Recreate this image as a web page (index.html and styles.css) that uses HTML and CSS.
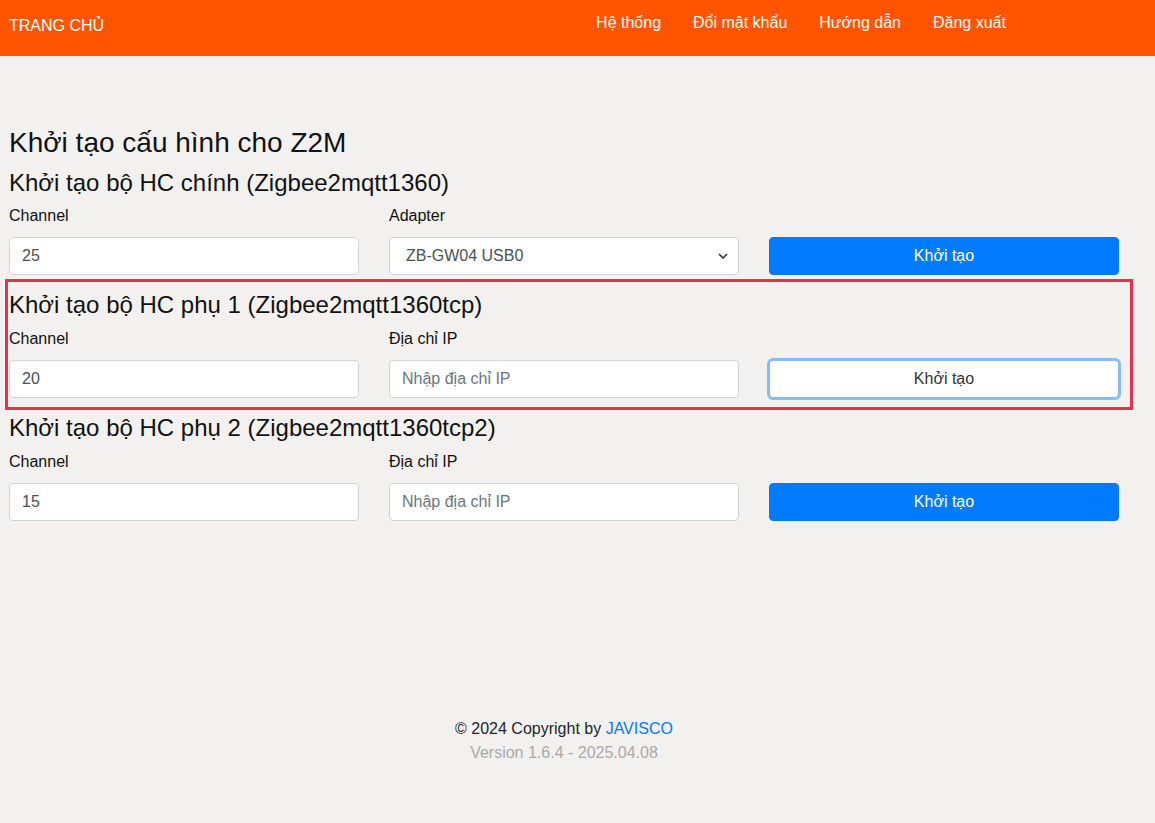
FILE: index.html
```html
<!DOCTYPE html>
<html lang="vi">
<head>
<meta charset="utf-8">
<title>Khởi tạo cấu hình cho Z2M</title>
<link rel="stylesheet" href="styles.css">
</head>
<body>
<header class="topbar">
  <a class="brand" href="#">TRANG CHỦ</a>
  <nav class="nav">
    <a href="#">Hệ thống</a>
    <a href="#">Đổi mật khẩu</a>
    <a href="#">Hướng dẫn</a>
    <a href="#">Đăng xuất</a>
  </nav>
</header>

<main class="page">
  <h3 class="title">Khởi tạo cấu hình cho Z2M</h3>

  <section class="block first">
    <h4 class="sub">Khởi tạo bộ HC chính (Zigbee2mqtt1360)</h4>
    <div class="row">
      <div class="field">
        <label>Channel</label>
        <input class="control" type="text" value="25">
      </div>
      <div class="field">
        <label>Adapter</label>
        <select class="control select"><option>ZB-GW04 USB0</option></select>
      </div>
      <div class="field end">
        <button class="btn primary">Khởi tạo</button>
      </div>
    </div>
  </section>

  <section class="block marked">
    <h4 class="sub">Khởi tạo bộ HC phụ 1 (Zigbee2mqtt1360tcp)</h4>
    <div class="row">
      <div class="field">
        <label>Channel</label>
        <input class="control" type="text" value="20">
      </div>
      <div class="field">
        <label>Địa chỉ IP</label>
        <input class="control" type="text" placeholder="Nhập địa chỉ IP">
      </div>
      <div class="field end">
        <button class="btn focused">Khởi tạo</button>
      </div>
    </div>
  </section>

  <section class="block last">
    <h4 class="sub">Khởi tạo bộ HC phụ 2 (Zigbee2mqtt1360tcp2)</h4>
    <div class="row">
      <div class="field">
        <label>Channel</label>
        <input class="control" type="text" value="15">
      </div>
      <div class="field">
        <label>Địa chỉ IP</label>
        <input class="control" type="text" placeholder="Nhập địa chỉ IP">
      </div>
      <div class="field end">
        <button class="btn primary">Khởi tạo</button>
      </div>
    </div>
  </section>
</main>

<footer class="footer">
  <div>© 2024 Copyright by <a href="#">JAVISCO</a></div>
  <div class="version">Version 1.6.4 - 2025.04.08</div>
</footer>
</body>
</html>
```

FILE: styles.css
```css
* { box-sizing: border-box; }

html, body {
  margin: 0;
  padding: 0;
}

body {
  background: #f2f1f0;
  font-family: "Liberation Sans", Arial, Helvetica, sans-serif;
  font-size: 16px;
  line-height: 1.5;
  color: #212529;
}

.topbar {
  background: #ff5500;
  height: 56px;
  display: flex;
  align-items: flex-start;
}

.brand {
  color: #fff;
  text-decoration: none;
  font-size: 16px;
  line-height: 24px;
  padding: 14px 0 0 9px;
}

.nav {
  display: flex;
  margin-left: 476px;
  padding-top: 11px;
}

.nav a {
  color: #fff;
  text-decoration: none;
  line-height: 24px;
  padding: 0 16px;
}

.page {
  padding: 70px 0 0 9px;
}

.title {
  font-size: 28px;
  font-weight: 400;
  line-height: 1.2;
  margin: 0 0 9px;
  color: #111;
}

.sub {
  font-size: 24px;
  font-weight: 400;
  line-height: 1.2;
  margin: 0 0 7px;
  color: #111;
}

.row {
  display: grid;
  grid-template-columns: repeat(3, 350px);
  column-gap: 30px;
}

.field {
  display: flex;
  flex-direction: column;
}

.field.end {
  justify-content: flex-end;
}

.field label {
  line-height: 24px;
  margin-bottom: 9px;
  color: #111;
}

.control {
  height: 38px;
  width: 100%;
  padding: 6px 12px;
  font: inherit;
  font-size: 16px;
  color: #495057;
  background: #fff;
  border: 1px solid #ced4da;
  border-radius: 4px;
}

.control::placeholder {
  color: #6c757d;
}

.select {
  appearance: none;
  -webkit-appearance: none;
  padding-left: 16px;
  background: #fff url("data:image/svg+xml;utf8,<svg xmlns='http://www.w3.org/2000/svg' width='10' height='6' viewBox='0 0 10 6'><path d='M1 1l4 4 4-4' fill='none' stroke='%23333' stroke-width='1.6'/></svg>") no-repeat right 10px center;
}

.btn {
  height: 38px;
  width: 350px;
  font: inherit;
  font-size: 16px;
  border-radius: 4px;
  cursor: pointer;
}

.btn.primary {
  background: #007bff;
  border: 1px solid #007bff;
  color: #fff;
}

.btn.focused {
  background: #fff;
  color: #333;
  border: 1px solid #86bdf5;
  box-shadow: 0 0 0 2px #86bdf5;
}

.block.first {
  margin-bottom: 4px;
}

.block.marked {
  margin-left: -4px;
  width: 1128px;
  border: 3px solid #e8304a;
  padding: 9px 0 9px 1px;
}

.block.last {
  margin-top: 4px;
}

.footer {
  width: 1128px;
  margin-top: 196px;
  text-align: center;
  line-height: 24px;
}

.footer a {
  color: #007bff;
  text-decoration: none;
}

.version {
  color: #a9a9a9;
}
```
